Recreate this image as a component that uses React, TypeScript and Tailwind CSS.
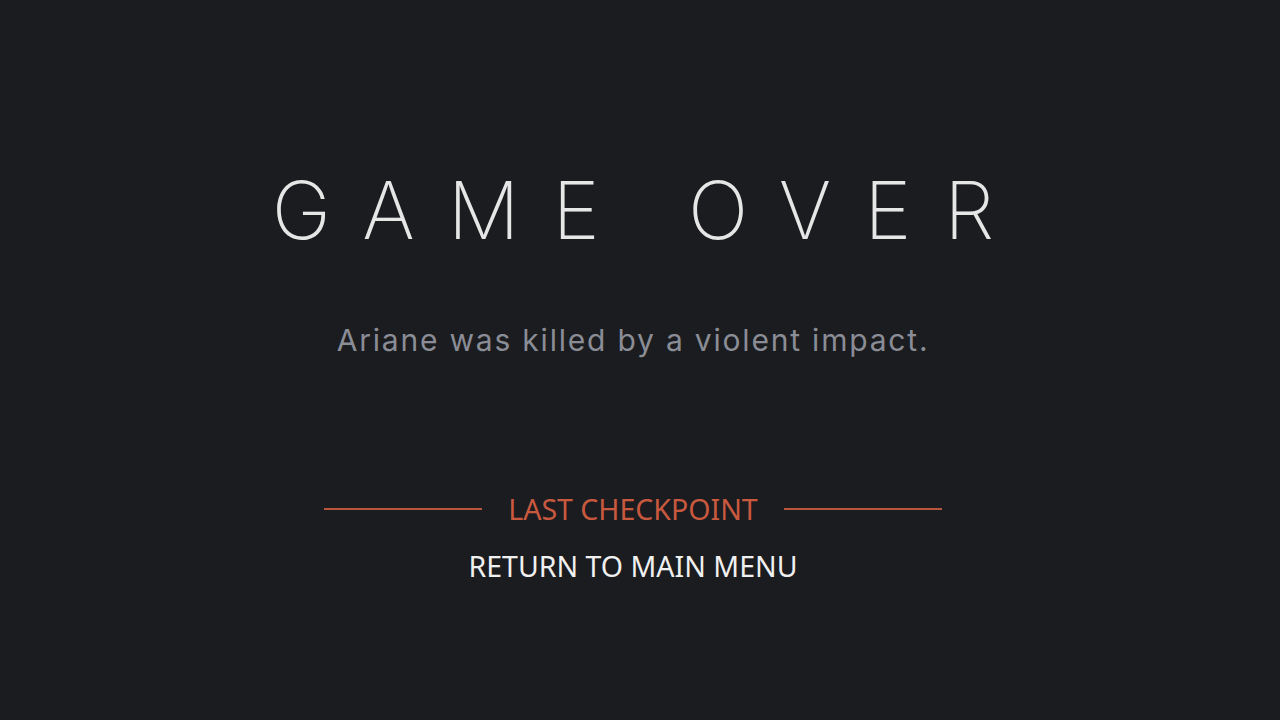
const GameOver = () => {
  return (
    <div className="min-h-screen w-full bg-[#1b1c1f] flex flex-col items-center pr-[14px] font-['Inter',sans-serif]">
      <h1 className="mt-[170px] pl-[33px] text-[80px] leading-none font-extralight tracking-[33px] text-[#e6e6e6]">
        GAME OVER
      </h1>
      <p className="mt-[75px] text-[30px] leading-none tracking-[0.06em] text-[#8a8d96]">
        Ariane was killed by a violent impact.
      </p>
      <div className="mt-[140px] flex items-center gap-[26px] font-['Noto_Sans',sans-serif]">
        <span className="block w-[158px] h-[2px] bg-[#b8553c]" />
        <button className="text-[28.5px] leading-none text-[#c8593f]">LAST CHECKPOINT</button>
        <span className="block w-[158px] h-[2px] bg-[#b8553c]" />
      </div>
      <button className="mt-[28px] text-[28.5px] leading-none text-[#f0f0f0] font-['Noto_Sans',sans-serif]">
        RETURN TO MAIN MENU
      </button>
    </div>
  )
}

export default function App() {
  return <GameOver />
}
